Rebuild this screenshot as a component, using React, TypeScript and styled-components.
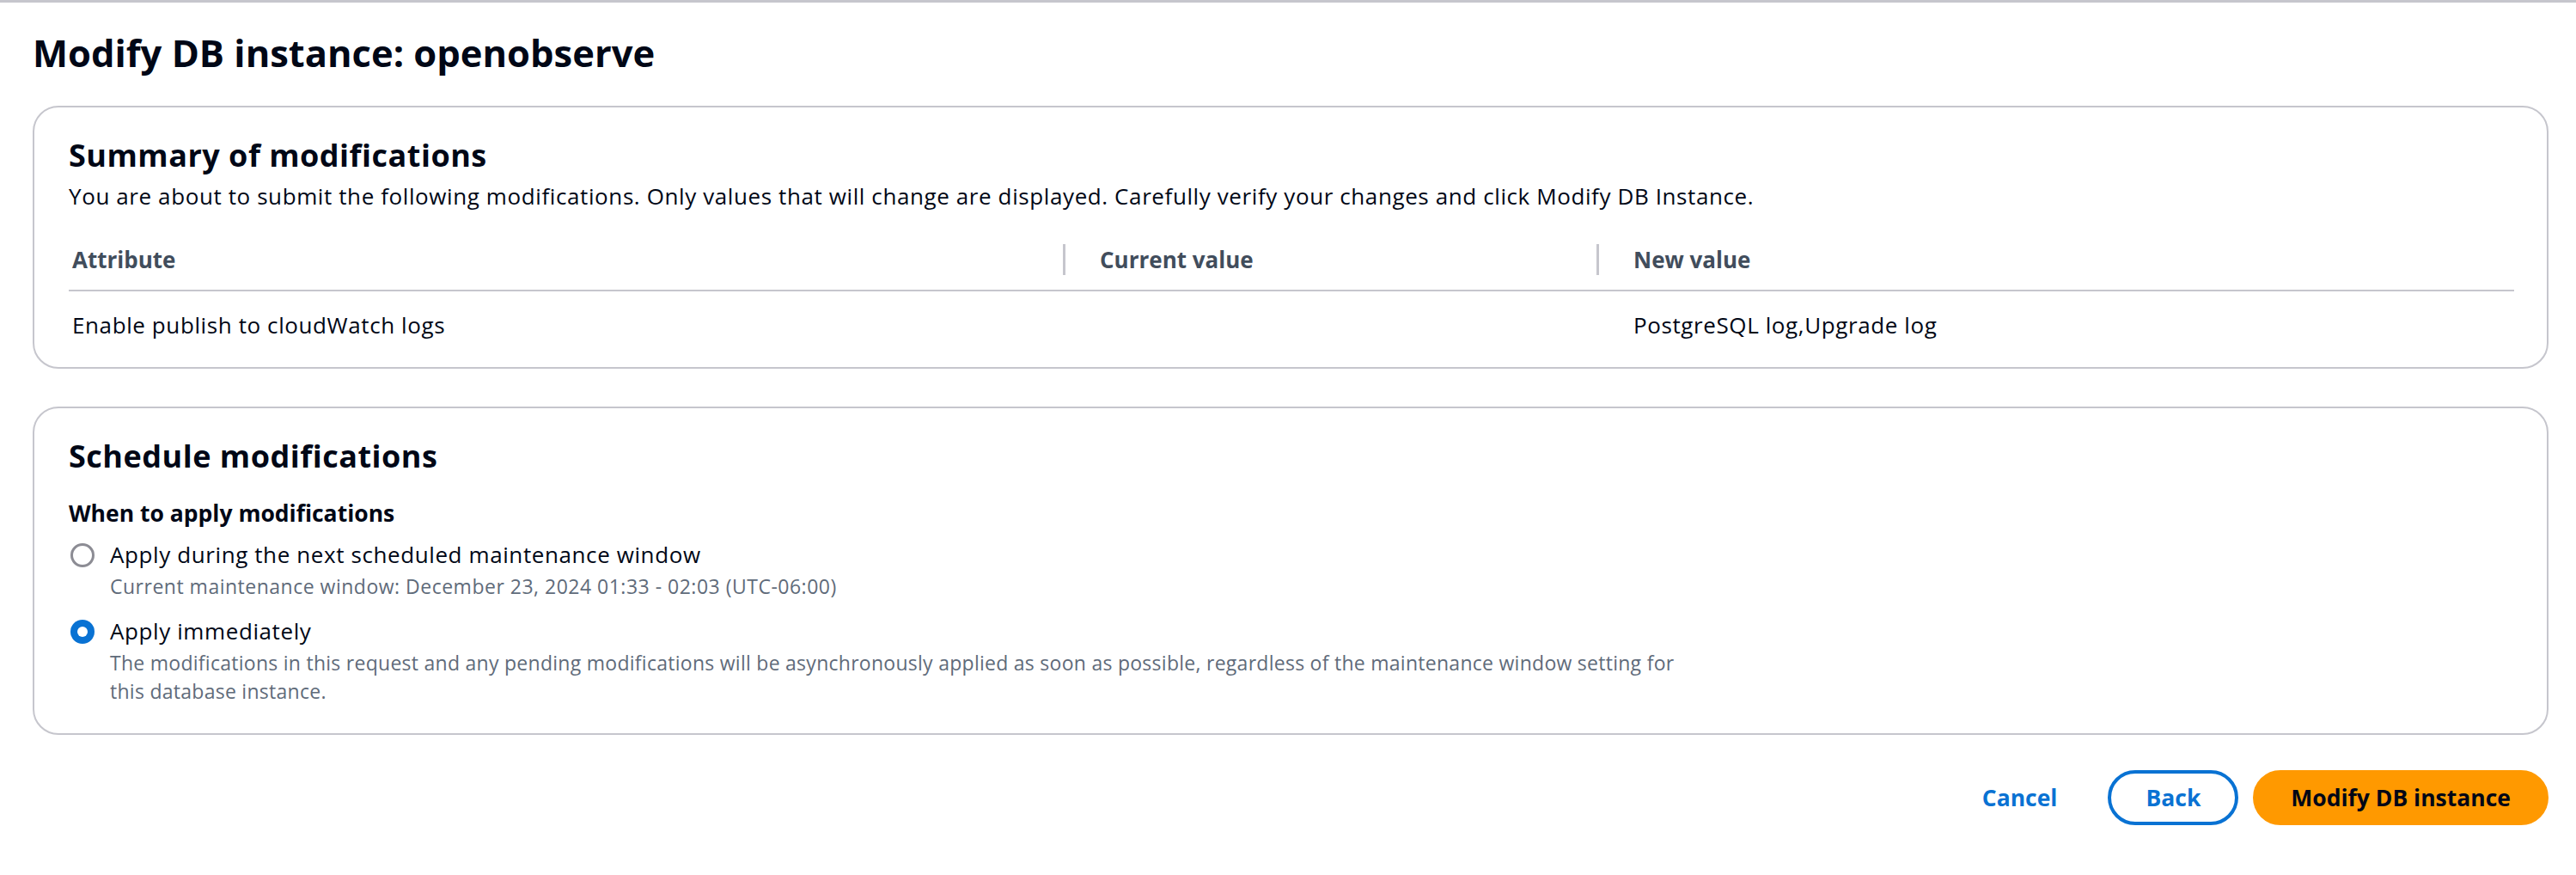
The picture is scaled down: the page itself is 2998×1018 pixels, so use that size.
import React from "react";
import styled, { createGlobalStyle } from "styled-components";

const GlobalStyle = createGlobalStyle`
  html, body {
    margin: 0;
    padding: 0;
    background: #ffffff;
  }
  body {
    font-family: "Open Sans", "Noto Sans", Arial, sans-serif;
    color: #000716;
    -webkit-font-smoothing: antialiased;
  }
  * { box-sizing: border-box; }
`;

const Page = styled.div`
  border-top: 3px solid #c6c6cd;
  padding: 33px 32px 40px 38px;
  display: flex;
  flex-direction: column;
`;

const Title = styled.h1`
  margin: 0 0 35px 0;
  font-size: 43.5px;
  line-height: 52px;
  font-weight: 700;
  color: #000716;
`;

const Card = styled.section<{ $gap?: number }>`
  border: 2px solid #c6c6cd;
  border-radius: 30px;
  padding: 36px 40px 32px 40px;
  margin-bottom: ${(p) => p.$gap ?? 0}px;
  background: #fff;
`;

const CardTitle = styled.h2`
  margin: 0;
  font-size: 36px;
  line-height: 40px;
  font-weight: 700;
  letter-spacing: 0.5px;
`;

const CardDesc = styled.p`
  margin: 10px 0 0 0;
  font-size: 26px;
  line-height: 34px;
  letter-spacing: 0.6px;
  color: #000716;
`;

const Table = styled.div`
  margin-top: 39px;
  display: grid;
  grid-template-columns: 1157px 621px 1fr;
  margin-right: -2px;
`;

const HeadCell = styled.div`
  display: flex;
  align-items: center;
  padding-bottom: 17px;
  border-bottom: 2px solid #c6c6cd;
  font-size: 26px;
  line-height: 34px;
  font-weight: 700;
  color: #414d5c;
`;

const HeadDivider = styled.span`
  width: 3px;
  height: 36px;
  background: #c6c6cd;
  margin-right: 40px;
`;

const HeadLabel = styled.span<{ $inset?: number }>`
  padding-left: ${(p) => p.$inset ?? 0}px;
`;

const BodyCell = styled.div<{ $inset: number }>`
  padding: 22px 0 0 ${(p) => p.$inset}px;
  font-size: 26px;
  line-height: 34px;
  letter-spacing: 0.6px;
  color: #000716;
`;

const FieldLabel = styled.div`
  margin-top: 29px;
  font-size: 26.5px;
  line-height: 34px;
  font-weight: 700;
`;

const RadioGroup = styled.div`
  display: flex;
  flex-direction: column;
  gap: 18px;
  margin-top: 14px;
`;

const RadioRow = styled.label`
  display: flex;
  align-items: flex-start;
  gap: 18px;
  margin-left: 2px;
`;

const RadioCircle = styled.span<{ $checked?: boolean }>`
  flex: none;
  width: 28px;
  height: 28px;
  margin-top: 4px;
  border-radius: 50%;
  display: flex;
  align-items: center;
  justify-content: center;
  ${(p) =>
    p.$checked
      ? `background: #0972d3;`
      : `border: 3.5px solid #8c8c94; background: #fff;`}
`;

const RadioDot = styled.span`
  width: 12px;
  height: 12px;
  border-radius: 50%;
  background: #fff;
`;

const RadioText = styled.div`
  display: flex;
  flex-direction: column;
  gap: 4px;
`;

const RadioLabel = styled.span`
  font-size: 26px;
  line-height: 34px;
  letter-spacing: 0.6px;
  color: #000716;
`;

const RadioDesc = styled.span<{ $spacing?: number }>`
  font-size: 23px;
  line-height: 33px;
  letter-spacing: ${(p) => p.$spacing ?? 0.5}px;
  color: #5f6b7a;
`;

const Actions = styled.div`
  margin-top: 41px;
  display: flex;
  justify-content: flex-end;
  align-items: center;
  gap: 17px;
`;

const LinkButton = styled.button`
  border: none;
  background: transparent;
  color: #0972d3;
  font-family: inherit;
  font-size: 26.5px;
  font-weight: 700;
  padding: 0 42px 0 0;
  height: 64px;
  cursor: pointer;
`;

const PillButton = styled.button<{ $primary?: boolean }>`
  height: 64px;
  border-radius: 32px;
  font-family: inherit;
  font-size: 26.5px;
  font-weight: 700;
  padding: 0 40px;
  cursor: pointer;
  border: 4px solid ${(p) => (p.$primary ? "#ff9900" : "#0972d3")};
  background: ${(p) => (p.$primary ? "#ff9900" : "#ffffff")};
  color: ${(p) => (p.$primary ? "#000716" : "#0972d3")};
`;

export default function App() {
  return (
    <>
      <GlobalStyle />
      <Page>
        <Title>Modify DB instance: openobserve</Title>

        <Card $gap={44}>
          <CardTitle>Summary of modifications</CardTitle>
          <CardDesc>
            You are about to submit the following modifications. Only values that
            will change are displayed. Carefully verify your changes and click
            Modify DB Instance.
          </CardDesc>
          <Table>
            <HeadCell>
              <HeadLabel $inset={4}>Attribute</HeadLabel>
            </HeadCell>
            <HeadCell>
              <HeadDivider />
              <HeadLabel>Current value</HeadLabel>
            </HeadCell>
            <HeadCell>
              <HeadDivider />
              <HeadLabel>New value</HeadLabel>
            </HeadCell>
            <BodyCell $inset={4}>Enable publish to cloudWatch logs</BodyCell>
            <BodyCell $inset={43}></BodyCell>
            <BodyCell $inset={43}>PostgreSQL log,Upgrade log</BodyCell>
          </Table>
        </Card>

        <Card>
          <CardTitle>Schedule modifications</CardTitle>
          <FieldLabel>When to apply modifications</FieldLabel>
          <RadioGroup>
            <RadioRow>
              <RadioCircle />
              <RadioText>
                <RadioLabel>Apply during the next scheduled maintenance window</RadioLabel>
                <RadioDesc>
                  Current maintenance window: December 23, 2024 01:33 - 02:03 (UTC-06:00)
                </RadioDesc>
              </RadioText>
            </RadioRow>
            <RadioRow>
              <RadioCircle $checked>
                <RadioDot />
              </RadioCircle>
              <RadioText>
                <RadioLabel>Apply immediately</RadioLabel>
                <RadioDesc $spacing={0.27}>
                  The modifications in this request and any pending modifications will be
                  asynchronously applied as soon as possible, regardless of the maintenance
                  window setting for
                  <br />
                  this database instance.
                </RadioDesc>
              </RadioText>
            </RadioRow>
          </RadioGroup>
        </Card>

        <Actions>
          <LinkButton>Cancel</LinkButton>
          <PillButton>Back</PillButton>
          <PillButton $primary>Modify DB instance</PillButton>
        </Actions>
      </Page>
    </>
  );
}
